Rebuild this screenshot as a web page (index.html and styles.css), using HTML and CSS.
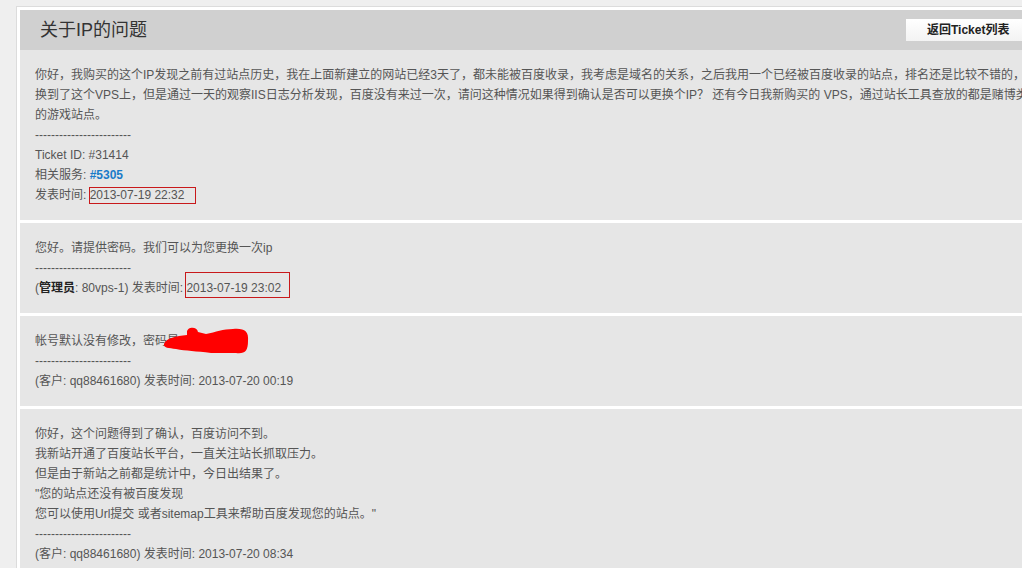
FILE: index.html
```html
<!DOCTYPE html>
<html lang="zh-CN">

<head>
    <meta charset="UTF-8">
    <title>关于IP的问题</title>
    <link rel="stylesheet" href="styles.css">
</head>

<body>
    <div class="ticket">
        <div class="ticket-head">
            <h1>关于IP的问题</h1>
            <a class="back" href="#">返回Ticket列表</a>
        </div>

        <div class="msg">
            <p>你好，我购买的这个IP发现之前有过站点历史，我在上面新建立的网站已经3天了，都未能被百度收录，我考虑是域名的关系，之后我用一个已经被百度收录的站点，排名还是比较不错的，<br>
                换到了这个VPS上，但是通过一天的观察IIS日志分析发现，百度没有来过一次，请问这种情况如果得到确认是否可以更换个IP？ 还有今日我新购买的 VPS，通过站长工具查放的都是赌博类<br>
                的游戏站点。</p>
            <p>------------------------</p>
            <p>Ticket ID: #31414</p>
            <p>相关服务: <a class="svc" href="#">#5305</a></p>
            <p>发表时间: <span class="mark mark-a">2013-07-19 22:32</span></p>
        </div>

        <div class="msg">
            <p>您好。请提供密码。我们可以为您更换一次ip</p>
            <p>------------------------</p>
            <p>(<b>管理员</b>: 80vps-1) 发表时间: <span class="mark mark-b">2013-07-19 23:02</span></p>
        </div>

        <div class="msg">
            <p>帐号默认没有修改，密码<span class="redact">是<svg width="92" height="36" viewBox="0 0 92 36"><path d="M3,21 C5,15 15,13 26,12 L26,9 C26,4 36,3 37,9 L45,11 C55,9 62,6 72,6 C83,5 88,8 87,18 C87,28 84,31 75,30 L50,30 C35,28 25,28 15,26 C8,25 2,25 3,21 Z" fill="#f00"/></svg></span></p>
            <p>------------------------</p>
            <p>(客户: qq88461680) 发表时间: 2013-07-20 00:19</p>
        </div>

        <div class="msg">
            <p>你好，这个问题得到了确认，百度访问不到。</p>
            <p>我新站开通了百度站长平台，一直关注站长抓取压力。</p>
            <p>但是由于新站之前都是统计中，今日出结果了。</p>
            <p>"您的站点还没有被百度发现</p>
            <p>您可以使用Url提交 或者sitemap工具来帮助百度发现您的站点。"</p>
            <p>------------------------</p>
            <p>(客户: qq88461680) 发表时间: 2013-07-20 08:34</p>
        </div>
    </div>
</body>

</html>
```

FILE: styles.css
```css
body {
    margin: 0;
    background-color: #efefef;
    font: 12px/20px "Liberation Sans", "Noto Sans CJK SC", sans-serif;
    color: #555;
    overflow: hidden;
}

.ticket {
    margin: 6px 0 0 16px;
    width: 1040px;
    padding: 3px;
    background-color: #fff;
    border: 1px solid #dcdcdc;
}

.ticket-head {
    height: 40px;
    padding-left: 20px;
    background-color: #d0d0d0;
    display: flex;
    align-items: center;
    justify-content: space-between;
}

h1 {
    margin: 0;
    font-size: 18px;
    font-weight: normal;
    color: #333;
}

.back {
    width: 103px;
    height: 22px;
    line-height: 22px;
    padding-left: 21px;
    margin-right: 30px;
    background: linear-gradient(#fff, #f3f3f3);
    color: #222;
    font-weight: bold;
    text-decoration: none;
}

.msg {
    margin-top: 3px;
    padding: 15px 15px 15px;
    background-color: #e6e6e6;
    white-space: nowrap;
}

.ticket-head + .msg {
    margin-top: 0;
}

.msg p {
    margin: 0;
}

.msg b {
    color: #222;
}

.svc {
    color: #1a7bc9;
    font-weight: bold;
    text-decoration: none;
}

.mark {
    position: relative;
}

.mark::after {
    content: "";
    position: absolute;
    left: -1px;
    top: 50%;
    border: 1px solid #c8191b;
}

.mark-a::after {
    width: 105px;
    height: 15px;
    margin-top: -8px;
}

.mark-b::after {
    width: 103px;
    height: 24px;
    margin-top: -16px;
}

.redact {
    position: relative;
}

.redact svg {
    position: absolute;
    left: -6px;
    top: -11px;
}
```
